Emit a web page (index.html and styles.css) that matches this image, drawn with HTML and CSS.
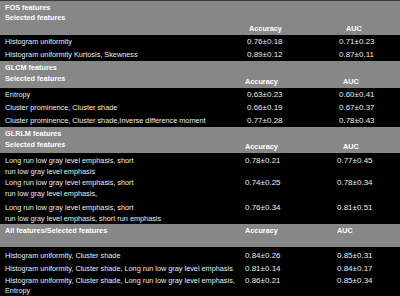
FILE: index.html
```html
<!DOCTYPE html>
<html>
<head>
<meta charset="utf-8">
<link rel="stylesheet" href="styles.css">
</head>
<body>
<div class="table">
  <div class="head head-fos">
    <div class="title">FOS features</div>
    <div class="title sub">Selected features</div>
    <div class="grid cols"><span></span><span class="acc">Accuracy</span><span class="auc">AUC</span></div>
  </div>
  <div class="body">
    <div class="grid row"><span class="label">Histogram uniformity</span><span class="val v1">0.76±0.18</span><span class="val v1">0.71±0.23</span></div>
    <div class="grid row"><span class="label">Histogram uniformity Kurtosis, Skewness</span><span class="val v1">0.89±0.12</span><span class="val v1">0.87±0.11</span></div>
  </div>

  <div class="head head-mid">
    <div class="title">GLCM features</div>
    <div class="grid cols2"><span class="label">Selected features</span><span class="acc">Accuracy</span><span class="auc">AUC</span></div>
  </div>
  <div class="body">
    <div class="grid row"><span class="label">Entropy</span><span class="val v1">0.63±0.23</span><span class="val v1">0.60±0.41</span></div>
    <div class="grid row"><span class="label">Cluster prominence, Cluster shade</span><span class="val v1">0.66±0.19</span><span class="val v1">0.67±0.37</span></div>
    <div class="grid row"><span class="label">Cluster prominence, Cluster shade,Inverse difference moment</span><span class="val v1">0.77±0.28</span><span class="val v1">0.78±0.43</span></div>
  </div>

  <div class="head head-mid">
    <div class="title">GLRLM features</div>
    <div class="grid cols2 cols2-low"><span class="label">Selected features</span><span class="acc">Accuracy</span><span class="auc">AUC</span></div>
  </div>
  <div class="body">
    <div class="grid row row2 pad-a"><span class="label">Long run low gray level emphasis, short<br>run low gray level emphasis</span><span class="val">0.78±0.21</span><span class="val">0.77±0.45</span></div>
    <div class="grid row row2"><span class="label">Long run low gray level emphasis, short<br>run low gray level emphasis,</span><span class="val">0.74±0.25</span><span class="val">0.78±0.34</span></div>
    <div class="grid row row2 pad-b"><span class="label">Long run low gray level emphasis, short<br>run low gray level emphasis, short run emphasis</span><span class="val">0.76±0.34</span><span class="val">0.81±0.51</span></div>
  </div>

  <div class="head head-all">
    <div class="grid cols3"><span class="label">All features/Selected features</span><span>Accuracy</span><span>AUC</span></div>
  </div>
  <div class="body body-all">
    <div class="grid row row3"><span class="label">Histogram uniformity, Cluster shade</span><span class="val">0.84±0.26</span><span class="val">0.85±0.31</span></div>
    <div class="grid row row3"><span class="label">Histogram uniformity, Cluster shade, Long run low gray level emphasis</span><span class="val">0.81±0.14</span><span class="val">0.84±0.17</span></div>
    <div class="grid row row3 last"><span class="label">Histogram uniformity, Cluster shade, Long run low gray level emphasis,<br>Entropy</span><span class="val">0.86±0.21</span><span class="val">0.85±0.34</span></div>
  </div>
</div>
</body>
</html>
```

FILE: styles.css
```css
html, body {
  margin: 0;
  padding: 0;
  background: #000;
}
body {
  width: 400px;
  height: 296px;
  overflow: hidden;
  font-family: "Liberation Sans", Arial, sans-serif;
  font-size: 7.3px;
  color: #ececec;
}
.table {
  border-top: 1px solid #3a3a3a;
}
.grid {
  display: grid;
  grid-template-columns: 245px 92px 1fr;
  white-space: nowrap;
}
.head {
  background: #878787;
  color: #fff;
  font-weight: bold;
  padding-left: 5px;
}
.head .grid {
  margin-left: -5px;
}
.head .grid .label {
  padding-left: 5px;
}
.head-fos {
  padding-top: 1px;
  padding-bottom: 1px;
}
.title {
  line-height: 11px;
}
.title.sub {
  line-height: 10px;
}
.cols {
  line-height: 11px;
}
.cols .acc { padding-left: 4px; }
.cols .auc { padding-left: 9px; }

.head-mid {
  padding-top: 1px;
  padding-bottom: 1px;
}
.cols2 {
  line-height: 11px;
}
.cols2 .acc, .cols2 .auc {
  padding-top: 3px;
}
.cols2 .auc { padding-left: 6px; }
.cols2-low .acc, .cols2-low .auc {
  padding-top: 2px;
}

.head-all {
  padding-top: 2px;
  padding-bottom: 11px;
}
.cols3 {
  line-height: 10px;
}

.row {
  line-height: 13px;
}
.row .label {
  padding-left: 5px;
}
.val {
  font-size: 8px;
}
.v1 {
  padding-left: 2px;
}
.row2 {
  line-height: 11px;
}
.pad-a { padding-top: 2px; }
.pad-b { padding-top: 3px; }

.body-all {
  padding-top: 1px;
}
.row3 {
  line-height: 11px;
  padding-top: 2px;
}
.row3.last {
  line-height: 10px;
}
```
